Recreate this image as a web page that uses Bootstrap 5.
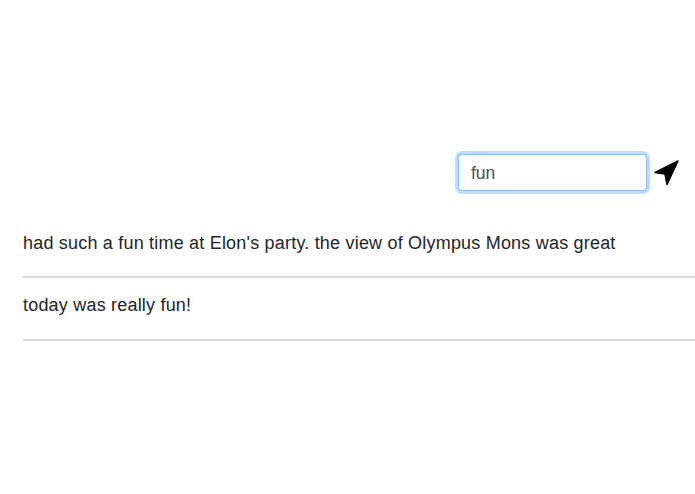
<!DOCTYPE html>
<html><head><meta charset="utf-8">
<link href="https://cdn.jsdelivr.net/npm/bootstrap@5.3.0/dist/css/bootstrap.min.css" rel="stylesheet">
<style>
html,body{height:494px;overflow:hidden;background:#fff}
body{font-family:"Liberation Sans",Arial,sans-serif;color:#212529}
.page-wrap{padding:154px 0 0 23px}
.search-row{padding-right:16px;gap:6px}
.search-box{width:189px;height:37px;font-size:17.5px;font-family:"Liberation Sans",sans-serif;padding:7px 12px 5px;border:1px solid #80bdff;border-radius:4px;box-shadow:0 0 0 3px rgba(0,123,255,.25);color:#495057}
.entry-item{font-size:18px;letter-spacing:.2px;line-height:26px;height:63px;padding-top:14px;border-bottom:2px solid #d8dadc}
.entry-first{margin-top:24px;padding-top:15px}
.nav-arrow{flex:none}
</style></head><body>
<div class="page-wrap">
<div class="d-flex justify-content-end align-items-center search-row">
<input class="form-control search-box" value="fun">
<svg class="nav-arrow" width="26" height="26" viewBox="0 0 26 26"><path d="M25 1 L2 12.5 L12 14 L14 24.5 Z" fill="#000" stroke="#000" stroke-width="1.5" stroke-linejoin="round"/></svg>
</div>
<div class="entry-item entry-first">had such a fun time at Elon's party. the view of Olympus Mons was great</div>
<div class="entry-item">today was really fun!</div>
</div>
<script src="https://cdn.jsdelivr.net/npm/bootstrap@5.3.0/dist/js/bootstrap.bundle.min.js"></script>
</body></html>
